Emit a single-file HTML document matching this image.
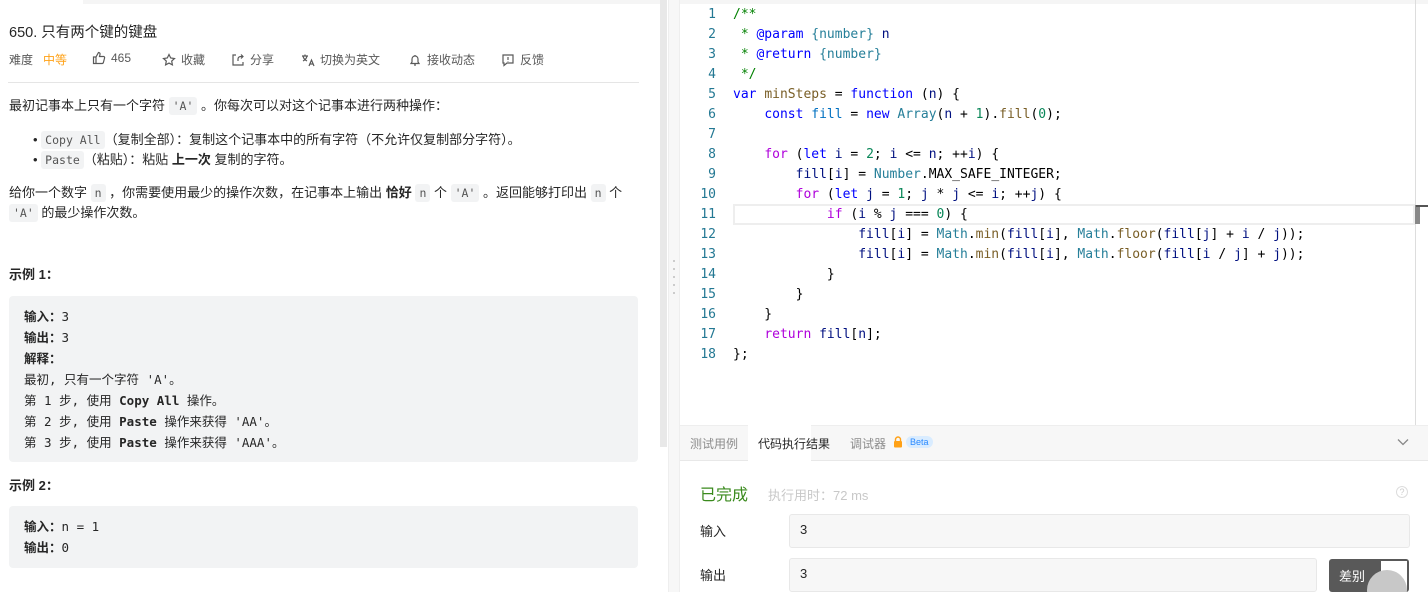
<!DOCTYPE html>
<html><head><meta charset="utf-8"><style>
*{margin:0;padding:0;box-sizing:border-box}
body{width:1428px;height:592px;overflow:hidden;background:#fff;font-family:"Liberation Sans","Noto Sans CJK SC",sans-serif;color:#262626;position:relative}
.abs{position:absolute}
.code{font-family:"DejaVu Sans Mono","Liberation Mono",monospace}
.ic{background:#f2f3f4;border-radius:3px;padding:2px 4px;font-family:"DejaVu Sans Mono",monospace;font-size:11.5px;color:#555}
p{font-size:13px;line-height:20px}
.pre{background:#f2f3f4;border-radius:4px;font-family:"DejaVu Sans Mono","Noto Sans CJK SC",monospace;font-size:12.5px;line-height:21px;color:#262626;padding:10px 15px}
.pre b{font-weight:bold}
.meta span{position:absolute;top:51px;font-size:12px;color:#595959;display:flex;align-items:center;gap:5px}
.meta svg{width:14px;height:14px;fill:none;stroke:#595959;stroke-width:1.2}
.ln{position:absolute;left:680px;width:36px;text-align:right;font-size:13px;color:#237893}
.cl{position:absolute;left:733px;font-size:13px;white-space:pre;color:#000}
.c{color:#008000}.k{color:#0000ff}.f{color:#af00db}.v{color:#001080}.d{color:#0070c1}.t{color:#267f99}.m{color:#795e26}.n{color:#098658}
</style></head><body>
<div class="abs" style="left:83px;top:0;width:577px;height:4px;background:#f5f5f5"></div>
<div class="abs" style="left:9px;top:21px;font-size:14.5px;color:#262626">650. 只有两个键的键盘</div>
<div class="meta">
<span style="left:9px">难度</span><span style="left:43px;color:#ffa116">中等</span>
<span style="left:92px"><svg viewBox="0 0 14 14"><path d="M1.5 6h2.5v6.5H1.5zM4 6l2.5-4.5c1 0 1.8.8 1.5 2L7.5 5.5h4c.8 0 1.3.7 1.1 1.4l-1.2 4.6c-.2.6-.7 1-1.3 1H4"/></svg>465</span>
<span style="left:162px"><svg viewBox="0 0 14 14"><path d="M7 1.5l1.7 3.5 3.8.5-2.8 2.6.7 3.8L7 10.1 3.6 11.9l.7-3.8L1.5 5.5l3.8-.5z"/></svg>收藏</span>
<span style="left:231px"><svg viewBox="0 0 14 14"><path d="M5 2H2v10h10V9M7 8V6c0-1.5 1-2.5 3-2.5h2M10 1.5l2 2-2 2"/></svg>分享</span>
<span style="left:301px"><svg viewBox="0 0 14 14"><path d="M1 3h6M4 1.5V3M2 3c.5 2.5 2 4 4 5M6 3c-.5 2.5-2 4-4 5M8 13l2.5-6 2.5 6M9 11h3"/></svg>切换为英文</span>
<span style="left:408px"><svg viewBox="0 0 14 14"><path d="M3 10.5h8l-1-1.5V6a3 3 0 00-6 0v3zM6 12h2M7 2v1"/></svg>接收动态</span>
<span style="left:501px"><svg viewBox="0 0 14 14"><path d="M2 2h10v8H6l-3 2.5V10H2zM7 4v3M7 8v.5"/></svg>反馈</span>
</div>
<div class="abs" style="left:8px;top:82px;width:631px;height:1px;background:#e5e5e5"></div>
<div class="abs" style="left:9px;top:96px;width:640px">
<p>最初记事本上只有一个字符 <span class="ic">'A'</span> 。你每次可以对这个记事本进行两种操作：</p>
<p style="margin-top:14px;padding-left:24px;line-height:19px">• <span class="ic">Copy All</span>（复制全部）：复制这个记事本中的所有字符（不允许仅复制部分字符）。</p>
<p style="padding-left:24px;line-height:19px">• <span class="ic">Paste</span>（粘贴）：粘贴 <b>上一次</b> 复制的字符。</p>
<p style="margin-top:13px">给你一个数字 <span class="ic">n</span> ，你需要使用最少的操作次数，在记事本上输出 <b>恰好</b> <span class="ic">n</span> 个 <span class="ic">'A'</span> 。返回能够打印出 <span class="ic">n</span> 个<br><span class="ic">'A'</span> 的最少操作次数。</p>
</div>
<div class="abs" style="left:9px;top:264px;font-size:13px;font-weight:bold">示例 1：</div>
<div class="abs pre" style="left:9px;top:296px;width:629px;height:166px"><b>输入：</b>3<br><b>输出：</b>3<br><b>解释：</b><br>最初, 只有一个字符 'A'。<br>第 1 步, 使用 <b>Copy All</b> 操作。<br>第 2 步, 使用 <b>Paste</b> 操作来获得 'AA'。<br>第 3 步, 使用 <b>Paste</b> 操作来获得 'AAA'。</div>
<div class="abs" style="left:9px;top:475px;font-size:13px;font-weight:bold">示例 2：</div>
<div class="abs pre" style="left:9px;top:506px;width:629px;height:62px"><b>输入：</b>n = 1<br><b>输出：</b>0</div>
<div class="abs" style="left:660px;top:0;width:7px;height:447px;background:#e8e8e8"></div>
<div class="abs" style="left:668px;top:0;width:12px;height:592px;background:#f7f7f7;border-left:1px solid #eee;border-right:1px solid #eee"></div>
<div class="abs" style="left:673px;top:260px;width:2px;height:40px;background:repeating-linear-gradient(#ccc 0 2px,transparent 2px 8px)"></div>
<div class="abs" style="left:680px;top:0;width:748px;height:4px;background:#f5f5f5"></div>
<div class="abs" style="left:733px;top:204px;width:682px;height:21px;border:2px solid #eee"></div>
<div class="abs" style="left:1415px;top:0;width:1px;height:425px;background:#ddd"></div>
<div class="abs" style="left:1415px;top:205px;width:5px;height:19px;background:#888"></div>
<div class="abs" style="left:1416px;top:205px;width:12px;height:2px;background:#555"></div>
<div class="code">
<div class="ln" style="top:7px">1</div><div class="cl" style="top:7px"><span class="c">/**</span></div>
<div class="ln" style="top:27px">2</div><div class="cl" style="top:27px"><span class="c"> * </span><span class="k">@param</span> <span class="t">{number}</span> <span class="v">n</span></div>
<div class="ln" style="top:47px">3</div><div class="cl" style="top:47px"><span class="c"> * </span><span class="k">@return</span> <span class="t">{number}</span></div>
<div class="ln" style="top:67px">4</div><div class="cl" style="top:67px"><span class="c"> */</span></div>
<div class="ln" style="top:87px">5</div><div class="cl" style="top:87px"><span class="k">var</span> <span class="m">minSteps</span> = <span class="k">function</span> (<span class="v">n</span>) {</div>
<div class="ln" style="top:107px">6</div><div class="cl" style="top:107px">    <span class="k">const</span> <span class="d">fill</span> = <span class="k">new</span> <span class="t">Array</span>(<span class="v">n</span> + <span class="n">1</span>).<span class="m">fill</span>(<span class="n">0</span>);</div>
<div class="ln" style="top:127px">7</div>
<div class="ln" style="top:147px">8</div><div class="cl" style="top:147px">    <span class="f">for</span> (<span class="k">let</span> <span class="v">i</span> = <span class="n">2</span>; <span class="v">i</span> &lt;= <span class="v">n</span>; ++<span class="v">i</span>) {</div>
<div class="ln" style="top:167px">9</div><div class="cl" style="top:167px">        <span class="v">fill</span>[<span class="v">i</span>] = <span class="t">Number</span>.MAX_SAFE_INTEGER;</div>
<div class="ln" style="top:187px">10</div><div class="cl" style="top:187px">        <span class="f">for</span> (<span class="k">let</span> <span class="v">j</span> = <span class="n">1</span>; <span class="v">j</span> * <span class="v">j</span> &lt;= <span class="v">i</span>; ++<span class="v">j</span>) {</div>
<div class="ln" style="top:207px">11</div><div class="cl" style="top:207px">            <span class="f">if</span> (<span class="v">i</span> % <span class="v">j</span> === <span class="n">0</span>) {</div>
<div class="ln" style="top:227px">12</div><div class="cl" style="top:227px">                <span class="v">fill</span>[<span class="v">i</span>] = <span class="t">Math</span>.<span class="m">min</span>(<span class="v">fill</span>[<span class="v">i</span>], <span class="t">Math</span>.<span class="m">floor</span>(<span class="v">fill</span>[<span class="v">j</span>] + <span class="v">i</span> / <span class="v">j</span>));</div>
<div class="ln" style="top:247px">13</div><div class="cl" style="top:247px">                <span class="v">fill</span>[<span class="v">i</span>] = <span class="t">Math</span>.<span class="m">min</span>(<span class="v">fill</span>[<span class="v">i</span>], <span class="t">Math</span>.<span class="m">floor</span>(<span class="v">fill</span>[<span class="v">i</span> / <span class="v">j</span>] + <span class="v">j</span>));</div>
<div class="ln" style="top:267px">14</div><div class="cl" style="top:267px">            }</div>
<div class="ln" style="top:287px">15</div><div class="cl" style="top:287px">        }</div>
<div class="ln" style="top:307px">16</div><div class="cl" style="top:307px">    }</div>
<div class="ln" style="top:327px">17</div><div class="cl" style="top:327px">    <span class="f">return</span> <span class="v">fill</span>[<span class="v">n</span>];</div>
<div class="ln" style="top:347px">18</div><div class="cl" style="top:347px">};</div>
</div>
<div class="abs" style="left:680px;top:425px;width:748px;height:36px;background:#f7f7f7;border-top:1px solid #eee;border-bottom:1px solid #e8e8e8"></div>
<div class="abs" style="left:748px;top:425px;width:63px;height:37px;background:#fff"></div>
<div class="abs" style="left:690px;top:435px;font-size:12px;color:#8c8c8c">测试用例</div>
<div class="abs" style="left:758px;top:435px;font-size:12px;color:#262626">代码执行结果</div>
<div class="abs" style="left:850px;top:435px;font-size:12px;color:#8c8c8c">调试器</div>
<svg class="abs" style="left:892px;top:436px" width="12" height="12" viewBox="0 0 12 12"><path d="M3.5 5V3.5a2.5 2.5 0 015 0V5" fill="none" stroke="#ffa116" stroke-width="1.4"/><rect x="2" y="5" width="8" height="6.5" rx="1" fill="#ffa116"/></svg>
<div class="abs" style="left:906px;top:436px;font-size:9px;color:#2b8aff;background:#d9ecff;border-radius:7px;padding:1px 4px">Beta</div>
<svg class="abs" style="left:1397px;top:438px" width="12" height="8" viewBox="0 0 12 8"><path d="M1 1.5l5 5 5-5" fill="none" stroke="#888" stroke-width="1.3"/></svg>
<div class="abs" style="left:700px;top:481px;font-size:16px;color:#3a8a1d">已完成</div>
<div class="abs" style="left:768px;top:485px;font-size:13px;color:#c8c8c8">执行用时：72 ms</div>
<div class="abs" style="left:1396px;top:486px;width:12px;height:12px;border:1px solid #ddd;border-radius:50%;font-size:9px;color:#ccc;text-align:center;line-height:10px">?</div>
<div class="abs" style="left:700px;top:521px;font-size:13px">输入</div>
<div class="abs" style="left:789px;top:514px;width:621px;height:34px;background:#f7f7f7;border:1px solid #e8e8e8;border-radius:3px;font-size:13px;padding:7px 10px">3</div>
<div class="abs" style="left:700px;top:565px;font-size:13px">输出</div>
<div class="abs" style="left:789px;top:558px;width:528px;height:34px;background:#f7f7f7;border:1px solid #e8e8e8;border-radius:3px;font-size:13px;padding:7px 10px">3</div>
<div class="abs" style="left:1329px;top:559px;width:80px;height:33px;background:#595959;border-radius:3px;color:#fff;font-size:13px;padding:7px 10px;overflow:hidden">差别<div class="abs" style="left:50px;top:0;width:30px;height:33px;background:#fff;border:2px solid #595959"></div><div class="abs" style="left:38px;top:11px;width:40px;height:40px;border-radius:50%;background:#c8c8c8"></div></div>
</body></html>
